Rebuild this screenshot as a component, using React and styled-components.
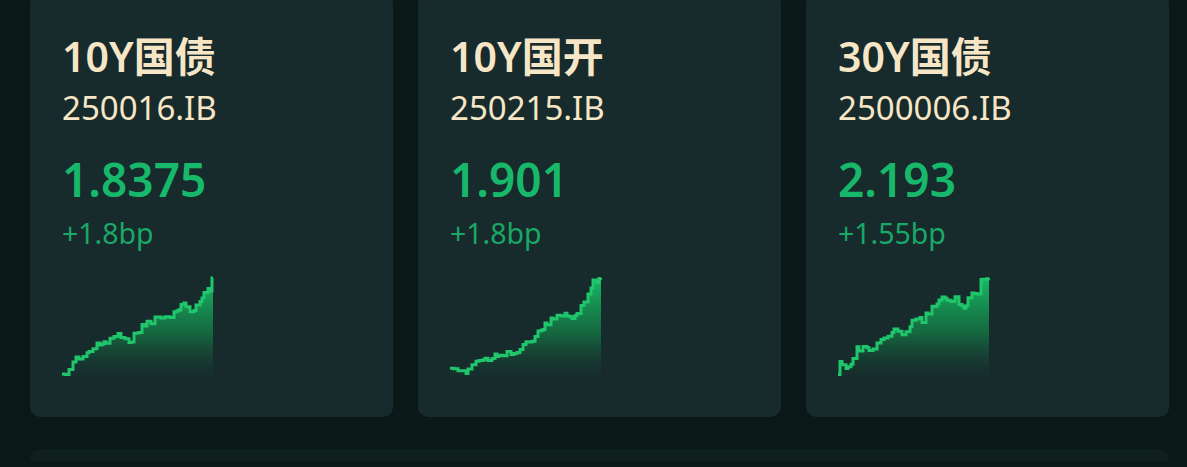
import React from 'react'
import styled, { createGlobalStyle } from 'styled-components'

const GlobalStyle = createGlobalStyle`
  html, body {
    margin: 0;
    padding: 0;
    background: #0a1918;
    overflow: hidden;
  }
  body {
    font-family: 'Noto Sans', 'Noto Sans CJK SC', sans-serif;
  }
`

const Page = styled.div`
  width: 1187px;
  height: 467px;
  padding: 0 18px 0 30px;
  box-sizing: border-box;
`

const Grid = styled.div`
  display: grid;
  grid-template-columns: repeat(3, 1fr);
  gap: 25px;
  margin-top: -6px;
`

const Card = styled.div`
  background: #172a2c;
  border-radius: 10px;
  padding: 42px 32px 28px;
  display: flex;
  flex-direction: column;
  align-items: flex-start;
`

const Title = styled.div`
  font-size: 41px;
  line-height: 41px;
  font-weight: 600;
  color: #f6e6c6;
`

const Code = styled.div`
  margin-top: 14px;
  font-size: 33px;
  line-height: 33px;
  color: #f6e6c6;
`

const Value = styled.div`
  margin-top: 32px;
  font-size: 46px;
  line-height: 46px;
  font-weight: 600;
  color: #17b86a;
`

const Delta = styled.div`
  margin-top: 17px;
  font-size: 28.5px;
  line-height: 28px;
  color: #19a866;
`

const Chart = styled.svg`
  margin-top: 29px;
  display: block;
`

const Lower = styled.div`
  margin-top: 32px;
  height: 40px;
  background: #0f1f1e;
  border-radius: 10px;
`

const W = 152
const H = 113

// pseudo-random jitter, fixed per seed so the picture stays the same
const rand = (i, seed) => {
  const v = Math.sin(i * 12.9898 + seed * 78.233) * 43758.5453
  return v - Math.floor(v)
}

const buildSeries = (anchors, seed) => {
  const pts = []
  let x = 0
  let i = 0
  while (x <= W - 1) {
    let k = 0
    while (k < anchors.length - 2 && anchors[k + 1][0] < x) k++
    const [x0, y0] = anchors[k]
    const [x1, y1] = anchors[k + 1]
    const t = x1 === x0 ? 1 : Math.min(1, Math.max(0, (x - x0) / (x1 - x0)))
    const base = y0 + (y1 - y0) * t
    const j = x > W - 5 ? 0 : (rand(i, seed) - 0.5) * 6
    pts.push([x, Math.max(1.5, Math.min(H - 8, base + j))])
    x += 2 + Math.floor(rand(i + 300, seed) * 3)
    i++
  }
  pts.push([W - 1, anchors[anchors.length - 1][1]])
  return pts
}

const stepPath = pts => {
  let d = `M${pts[0][0]} ${pts[0][1].toFixed(1)}`
  for (let i = 1; i < pts.length; i++) {
    d += ` H${pts[i][0]} V${pts[i][1].toFixed(1)}`
  }
  return d
}

const Spark = ({ anchors, seed, id }) => {
  const pts = buildSeries(anchors, seed)
  const line = stepPath(pts)
  const area = `${line} V${H} H0 Z`
  return (
    <Chart width={W} height={H} viewBox={`0 0 ${W} ${H}`}>
      <defs>
        <linearGradient id={id} x1="0" y1="0" x2="0" y2="1">
          <stop offset="0" stopColor="#16bb64" stopOpacity="1" />
          <stop offset="0.5" stopColor="#14994f" stopOpacity="0.55" />
          <stop offset="1" stopColor="#172a2c" stopOpacity="0" />
        </linearGradient>
      </defs>
      <path d={area} fill={`url(#${id})`} />
      <path d={line} fill="none" stroke="#1fc66b" strokeWidth="3" strokeLinejoin="miter" />
    </Chart>
  )
}

const bonds = [
  {
    name: '10Y国债',
    code: '250016.IB',
    value: '1.8375',
    delta: '+1.8bp',
    seed: 1,
    anchors: [[0, 100], [7, 93], [13, 83], [23, 78], [35, 70], [52, 61], [58, 58], [68, 65], [80, 50], [95, 42], [110, 41], [117, 31], [123, 28], [130, 36], [137, 28], [142, 15], [148, 15], [150, 2], [151, 2]],
  },
  {
    name: '10Y国开',
    code: '250215.IB',
    value: '1.901',
    delta: '+1.8bp',
    seed: 2,
    anchors: [[0, 95], [15, 96], [25, 85], [35, 83], [59, 75], [65, 78], [82, 63], [99, 46], [115, 36], [122, 43], [129, 36], [139, 16], [142, 6], [150, 2], [151, 2]],
  },
  {
    name: '30Y国债',
    code: '2500006.IB',
    value: '2.193',
    delta: '+1.55bp',
    seed: 3,
    anchors: [[0, 100], [2, 86], [4, 90], [11, 90], [19, 73], [34, 73], [47, 63], [56, 55], [64, 61], [74, 46], [86, 43], [92, 33], [102, 23], [117, 23], [126, 33], [132, 20], [141, 18], [142, 5], [151, 2]],
  },
]

export default function App() {
  return (
    <>
      <GlobalStyle />
      <Page>
        <Grid>
          {bonds.map(b => (
            <Card key={b.code}>
              <Title>{b.name}</Title>
              <Code>{b.code}</Code>
              <Value>{b.value}</Value>
              <Delta>{b.delta}</Delta>
              <Spark anchors={b.anchors} seed={b.seed} id={`g${b.seed}`} />
            </Card>
          ))}
        </Grid>
        <Lower />
      </Page>
    </>
  )
}
